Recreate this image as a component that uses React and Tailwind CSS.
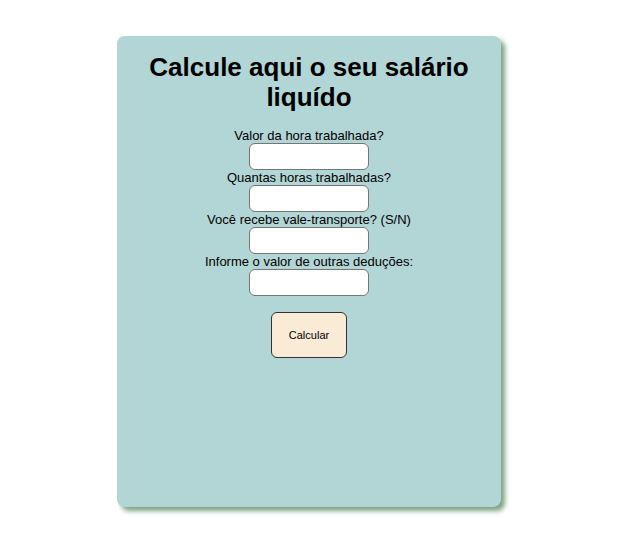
export default function App() {
  const fields = [
    'Valor da hora trabalhada?',
    'Quantas horas trabalhadas?',
    'Você recebe vale-transporte? (S/N)',
    'Informe o valor de outras deduções:',
  ];

  return (
    <div className="min-h-[558px] bg-white pt-[36px] pl-[117px]" style={{ fontFamily: '"Liberation Sans", Arial, sans-serif' }}>
      <div className="w-[384px] h-[471px] rounded-[8px] bg-[#b2d5d5] shadow-[4px_4px_5px_#7da382] flex flex-col items-center pt-[16px]">
        <h1 className="text-[26px] leading-[30px] font-bold text-black text-center px-[20px]">
          Calcule aqui o seu salário liquído
        </h1>
        <form className="flex flex-col items-center mt-[16px]" onSubmit={(e) => e.preventDefault()}>
          {fields.map((label) => (
            <div key={label} className="flex flex-col items-center">
              <label className="text-[13px] leading-[15px] text-black">{label}</label>
              <input type="text" className="w-[120px] h-[27px] bg-white border border-[#767676] rounded-[6px]" />
            </div>
          ))}
          <button type="submit" className="mt-[16px] w-[76px] h-[46px] bg-[#faebd7] border border-[#333] rounded-[6px] text-[11px] text-black">
            Calcular
          </button>
        </form>
      </div>
    </div>
  );
}
